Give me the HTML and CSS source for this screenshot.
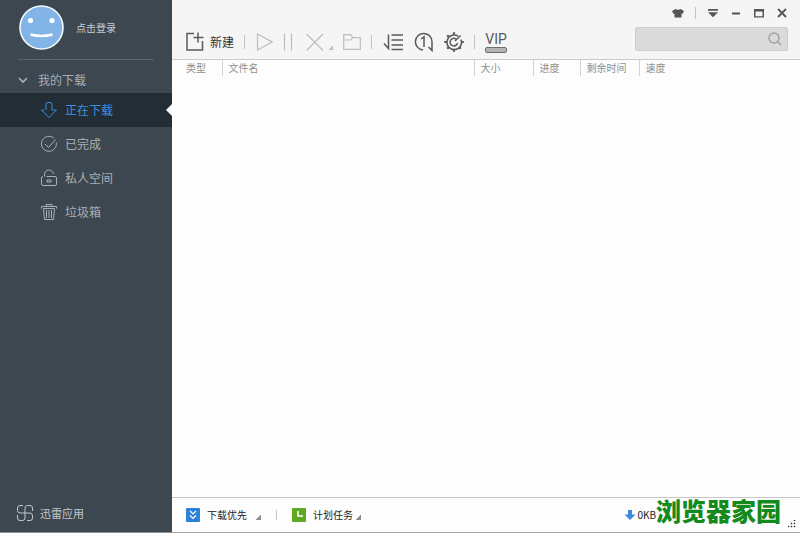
FILE: index.html
```html
<!DOCTYPE html>
<html lang="zh-CN">
<head>
    <meta charset="UTF-8">
    <meta name="viewport" content="width=device-width, initial-scale=1.0">
    <title>迅雷</title>
    <link rel="stylesheet" href="styles.css">
</head>
<body>

    <aside class="sidebar">
        <a class="profile" href="#">
            <svg class="avatar" viewBox="0 0 45 45">
                <circle cx="22.5" cy="22.5" r="21.5" fill="#82b4e8" stroke="#f6fafd" stroke-width="1.6"/>
                <circle cx="11.5" cy="15.5" r="2.6" fill="#fff"/>
                <circle cx="33" cy="15.5" r="2.6" fill="#fff"/>
                <path d="M11.5 29.5Q22.5 32.5 33.500 29.5" fill="none" stroke="#fff" stroke-width="2.4"/>
            </svg>
            <span>点击登录</span>
        </a>

        <nav class="nav">
            <button class="nav-group">
                <svg width="10" height="10" viewBox="0 0 10 10"><path d="M1 3l4 4 4-4" stroke-width="1.6"/></svg>
                我的下载
            </button>
            <a class="nav-item active" href="#">
                <svg width="18" height="18" viewBox="0 0 18 18"><path d="M6 9V3.500Q6 1.500 8 1.500h2Q12 1.500 12 3.500V9h4.500L9 16.500 1.500 9h2.500"/></svg>
                正在下载
            </a>
            <a class="nav-item" href="#">
                <svg width="18" height="18" viewBox="0 0 18 18"><path d="M14 3.300A7.500 7.500 0 1 0 16.300 7.500M5 9l3.500 3.500L15.500 4.500"/></svg>
                已完成
            </a>
            <a class="nav-item" href="#">
                <svg width="18" height="18" viewBox="0 0 18 18"><path d="M4.500 7.500V6a4.500 4.500 0 0 1 9-1M6.500 7.500H15q1.500 0 1.500 1.500v6q0 1.500-1.500 1.500H3Q1.500 16.500 1.500 15V9Q1.500 7.500 3 7.500M7 11h4v2H7z"/></svg>
                私人空间
            </a>
            <a class="nav-item" href="#">
                <svg width="18" height="18" viewBox="0 0 18 18"><path d="M1.500 5.500v-2h15v2M6 3.500v-2h6v2M3.500 5.500l1 11h9l1-11zM6.500 7v8M9 7v8M11.500 7v8"/></svg>
                垃圾箱
            </a>
        </nav>

        <a class="apps" href="#">
            <svg width="18" height="18" viewBox="0 0 18 18"><path d="M7 1.500H4Q1.500 1.500 1.500 4V6.500Q1.500 9 4 9H14Q16.500 9 16.500 11.500V14Q16.500 16.500 14 16.500H11M16.500 7V4Q16.500 1.500 14 1.500H11.500Q9 1.500 9 4V14Q9 16.500 6.500 16.500H4Q1.500 16.500 1.500 14V11"/></svg>
            迅雷应用
        </a>
    </aside>

    <main class="main">
        <header class="header">
            <div class="toolbar">
                <button class="new-task">
                    <svg width="18" height="20" viewBox="0 0 18 20"><path d="M8 1.500H1V18h15.500V9M12 .5v10M7.500 5.500h10"/></svg>
                    新建
                </button>
                <i class="sep"></i>
                <button class="off" aria-label="开始">
                    <svg width="18" height="20" viewBox="0 0 18 20"><path d="M2.500 2v16L17 10z"/></svg>
                </button>
                <button class="off" aria-label="暂停">
                    <svg width="10" height="20" viewBox="0 0 10 20"><path d="M1.500 1.500v17M8.500 1.500v17"/></svg>
                </button>
                <button class="off" aria-label="删除">
                    <svg width="30" height="20" viewBox="0 0 30 20"><path d="M3.500 2L20 18.500M20 2L3.500 18.500"/><path class="solid" d="M30 13.500V18h-4.500z"/></svg>
                </button>
                <button class="off" aria-label="打开文件夹">
                    <svg width="18" height="20" viewBox="0 0 18 20"><path d="M.7 17.300V2.700h7l2 3h7.600v11.600zM.7 8h7l2-2.300"/></svg>
                </button>
                <i class="sep"></i>
                <button aria-label="排序">
                    <svg width="22" height="20" viewBox="0 0 22 20"><path d="M6.500 2.500V16.500L2 11.500M9.500 3h11.500M9.500 8h11.500M9.500 13h11.500M9.500 17.500H21"/></svg>
                </button>
                <button aria-label="单任务">
                    <svg width="20" height="20" viewBox="0 0 20 20"><path d="M9 18A8.300 8.300 0 1 1 18 10V18.500L14.500 15M7 7l3-2.300V15"/></svg>
                </button>
                <button aria-label="设置">
                    <svg width="20" height="20" viewBox="0 0 20 20"><path d="M17 7.500A7.300 7.300 0 1 1 14 4M13.500 11A3.800 3.800 0 1 1 12 7M11 9L16.500 3.500"/><path d="M10 .2v2.500M10 17.300v2.500M.2 10h2.500M17.300 10h2.500M3.200 3.200l1.500 1.500M15.300 15.300l1.500 1.500M3.200 16.800l1.500-1.500" stroke-width="2.200"/></svg>
                </button>
                <i class="sep"></i>
                <button class="vip">VIP</button>
            </div>

            <div class="header-right">
                <div class="window-controls">
                    <button aria-label="皮肤"><svg width="12" height="10" viewBox="0 0 12 10"><path d="M3.500 1Q6 2.500 8.500 1L12 3 10.500 6 9.500 5.500V9.500h-7V5.500L1.500 6 0 3z" fill="#555"/></svg></button>
                    <i class="sep"></i>
                    <button aria-label="菜单"><svg width="12" height="10" viewBox="0 0 12 10"><path d="M1 1h10v1.700H1zM1 4.300h10L6 9.300z" fill="#555"/></svg></button>
                    <button aria-label="最小化"><svg width="12" height="10" viewBox="0 0 12 10"><path d="M2 4.500h8v2H2z" fill="#555"/></svg></button>
                    <button aria-label="最大化"><svg width="12" height="10" viewBox="0 0 12 10"><path d="M1 1h10v8.500H1zM2.500 3.500v4.700h7V3.500z" fill="#555" fill-rule="evenodd"/></svg></button>
                    <button aria-label="关闭"><svg width="12" height="10" viewBox="0 0 12 10"><path d="M2 1l8 8M10 1L2 9" stroke="#555" stroke-width="1.800"/></svg></button>
                </div>
                <div class="search">
                    <input type="text" aria-label="搜索">
                    <button aria-label="搜索"><svg width="14" height="14" viewBox="0 0 14 14"><circle cx="6" cy="6" r="5"/><path d="M9.500 9.500L13 13"/></svg></button>
                </div>
            </div>
        </header>

        <section class="list">
            <table class="tasks">
                <thead>
                    <tr>
                        <th class="col-type">类型</th>
                        <th>文件名</th>
                        <th class="col-size">大小</th>
                        <th class="col-progress">进度</th>
                        <th class="col-time">剩余时间</th>
                        <th class="col-speed">速度</th>
                    </tr>
                </thead>
            </table>
        </section>

        <footer class="status">
            <button class="status-item">
                <svg width="14" height="14" viewBox="0 0 14 14"><rect width="14" height="14" rx="1" fill="#2e82d6"/><path d="M4 3l3 3 3-3M4 7.500l3 3 3-3" fill="none" stroke="#fff" stroke-width="1.200"/></svg>
                下载优先
                <i class="corner"></i>
            </button>
            <i class="sep"></i>
            <button class="status-item plan">
                <svg width="14" height="14" viewBox="0 0 14 14"><rect width="14" height="14" rx="1" fill="#5fa822"/><path d="M6 3v5h5" fill="none" stroke="#fff" stroke-width="1.600"/></svg>
                计划任务
                <i class="corner"></i>
            </button>
            <div class="speed">
                <svg width="12" height="12" viewBox="0 0 12 12"><path d="M4 1h4v4.500h3.500L6 11 .5 5.500H4z" fill="#3d8ad8"/></svg>
                0KB
            </div>
            <svg class="grip" width="8" height="8" viewBox="0 0 8 8"><path d="M6 0h1v1H6zM3 3h1v1H3zM6 3h1v1H6zM0 6h1v1H0zM3 6h1v1H3zM6 6h1v1H6z" fill="#333" stroke="#333" stroke-width=".5"/></svg>
            <div class="watermark">浏览器家园</div>
        </footer>
    </main>

</body>
</html>
```
FILE: styles.css
```css
* { margin: 0; padding: 0; box-sizing: border-box; }
body { display: flex; height: 100vh; overflow: hidden; background: #fdfdfd; font-family: "Noto Sans CJK SC", sans-serif; font-size: 10px; line-height: 16px; color: #222; }

a { color: inherit; text-decoration: none; }
button { display: flex; align-items: center; background: none; border: none; font: inherit; color: inherit; cursor: pointer; }
svg { display: block; flex: none; }
.sep { flex: none; width: 1px; height: 14px; background: #c4c4c4; }

/* Sidebar */
.sidebar {
    display: flex;
    flex-direction: column;
    flex: none;
    width: 172px;
    background: #3c4750;
    border-bottom: 1px solid #8a9298;
    color: #a9b0b6;
}

.profile {
    display: flex;
    align-items: center;
    gap: 12px;
    height: 60px;
    margin: 0 18px;
    padding: 0 1px 4px;
    border-bottom: 1px solid #5b656d;
    color: #c9ced2;
}
.avatar { width: 45px; height: 45px; }

.nav { flex: 1; padding-top: 7px; font-size: 12px; }
.nav svg, .apps svg { fill: none; stroke: currentColor; stroke-width: 1; }
.nav-group { gap: 10px; width: 100%; height: 26px; padding-left: 18px; }
.nav-item { display: flex; align-items: center; gap: 7px; height: 34px; padding-left: 40px; }

.nav-item.active { position: relative; background: #232d35; color: #3f8fe0; }
.nav-item.active::after {
    content: "";
    position: absolute;
    right: 0;
    top: 11px;
    border: 6px solid transparent;
    border-left: none;
    border-right-color: #f8f8f8;
}

.apps { display: flex; align-items: center; gap: 6px; height: 38px; padding-left: 16px; font-size: 11px; color: #c3c8cc; }

/* Header */
.main { display: flex; flex-direction: column; flex: 1; min-width: 0; }
.header { display: flex; justify-content: space-between; height: 60px; background: #f5f5f5; border-bottom: 1px solid #cacaca; }

.toolbar { display: flex; align-items: center; gap: 10px; padding: 24px 0 0 14px; }
.toolbar svg { fill: none; stroke: #5a5a5a; stroke-width: 1.5; }
.toolbar .off svg { stroke: #bdbdbd; stroke-width: 1.2; }
.toolbar .off .solid { fill: #bdbdbd; stroke: none; }
.new-task { gap: 6px; font-size: 12px; color: #333; }
.vip {
    flex-direction: column;
    gap: 1px;
    width: 22px;
    padding-top: 2px;
    font: 14px/14px Roboto, sans-serif;
    color: #5a5a5a;
}
.vip::after { content: ""; width: 20px; height: 4px; background: #b5b5b5; border: 1px solid #6e6e6e; border-radius: 2px; }

.header-right { padding: 4px 12px 0 0; }
.window-controls { display: flex; align-items: center; justify-content: flex-end; gap: 11px; height: 18px; }
.window-controls .sep { height: 12px; }

.search { display: flex; align-items: center; width: 153px; height: 24px; margin-top: 5px; padding-right: 5px; background: #dadada; border: 1px solid #cfcfcf; border-radius: 2px; }
.search input { flex: 1; min-width: 0; height: 100%; padding-left: 6px; background: none; border: none; outline: none; font: inherit; }
.search svg { fill: none; stroke: #a2a2a2; stroke-width: 1.5; }

/* Task list */
.list { flex: 1; }
.tasks { width: 100%; table-layout: fixed; border-collapse: collapse; }
.tasks th { height: 16px; padding-left: 6px; border-left: 1px solid #d4d4d4; font-weight: normal; text-align: left; line-height: 14px; color: #8f8f8f; }
.tasks .col-type { width: 50px; padding-left: 14px; border-left: none; }
.col-size { width: 59px; }
.col-progress { width: 47px; }
.col-time { width: 59px; }
.col-speed { width: 161px; }

/* Status bar */
.status { position: relative; display: flex; align-items: center; height: 36px; padding: 0 4px 0 14px; border-top: 1px solid #c6c6c6; border-bottom: 1px solid #a8a8a8; }
.status .sep { height: 10px; margin: 0 15px; }
.status-item { gap: 7px; }
.corner { width: 5px; height: 5px; margin: 4px 0 0 2px; background: linear-gradient(135deg, transparent 50%, #8c8c8c 50%); }
.plan .corner { margin-left: -4px; }
.speed { display: flex; align-items: center; gap: 1px; margin-left: auto; padding-right: 132px; }
.grip { align-self: flex-end; margin-bottom: 4px; }

.watermark {
    position: absolute;
    right: 19px;
    top: -6px;
    font-size: 25px;
    font-weight: 900;
    line-height: 36px;
    color: #138a1c;
    white-space: nowrap;
}
```
